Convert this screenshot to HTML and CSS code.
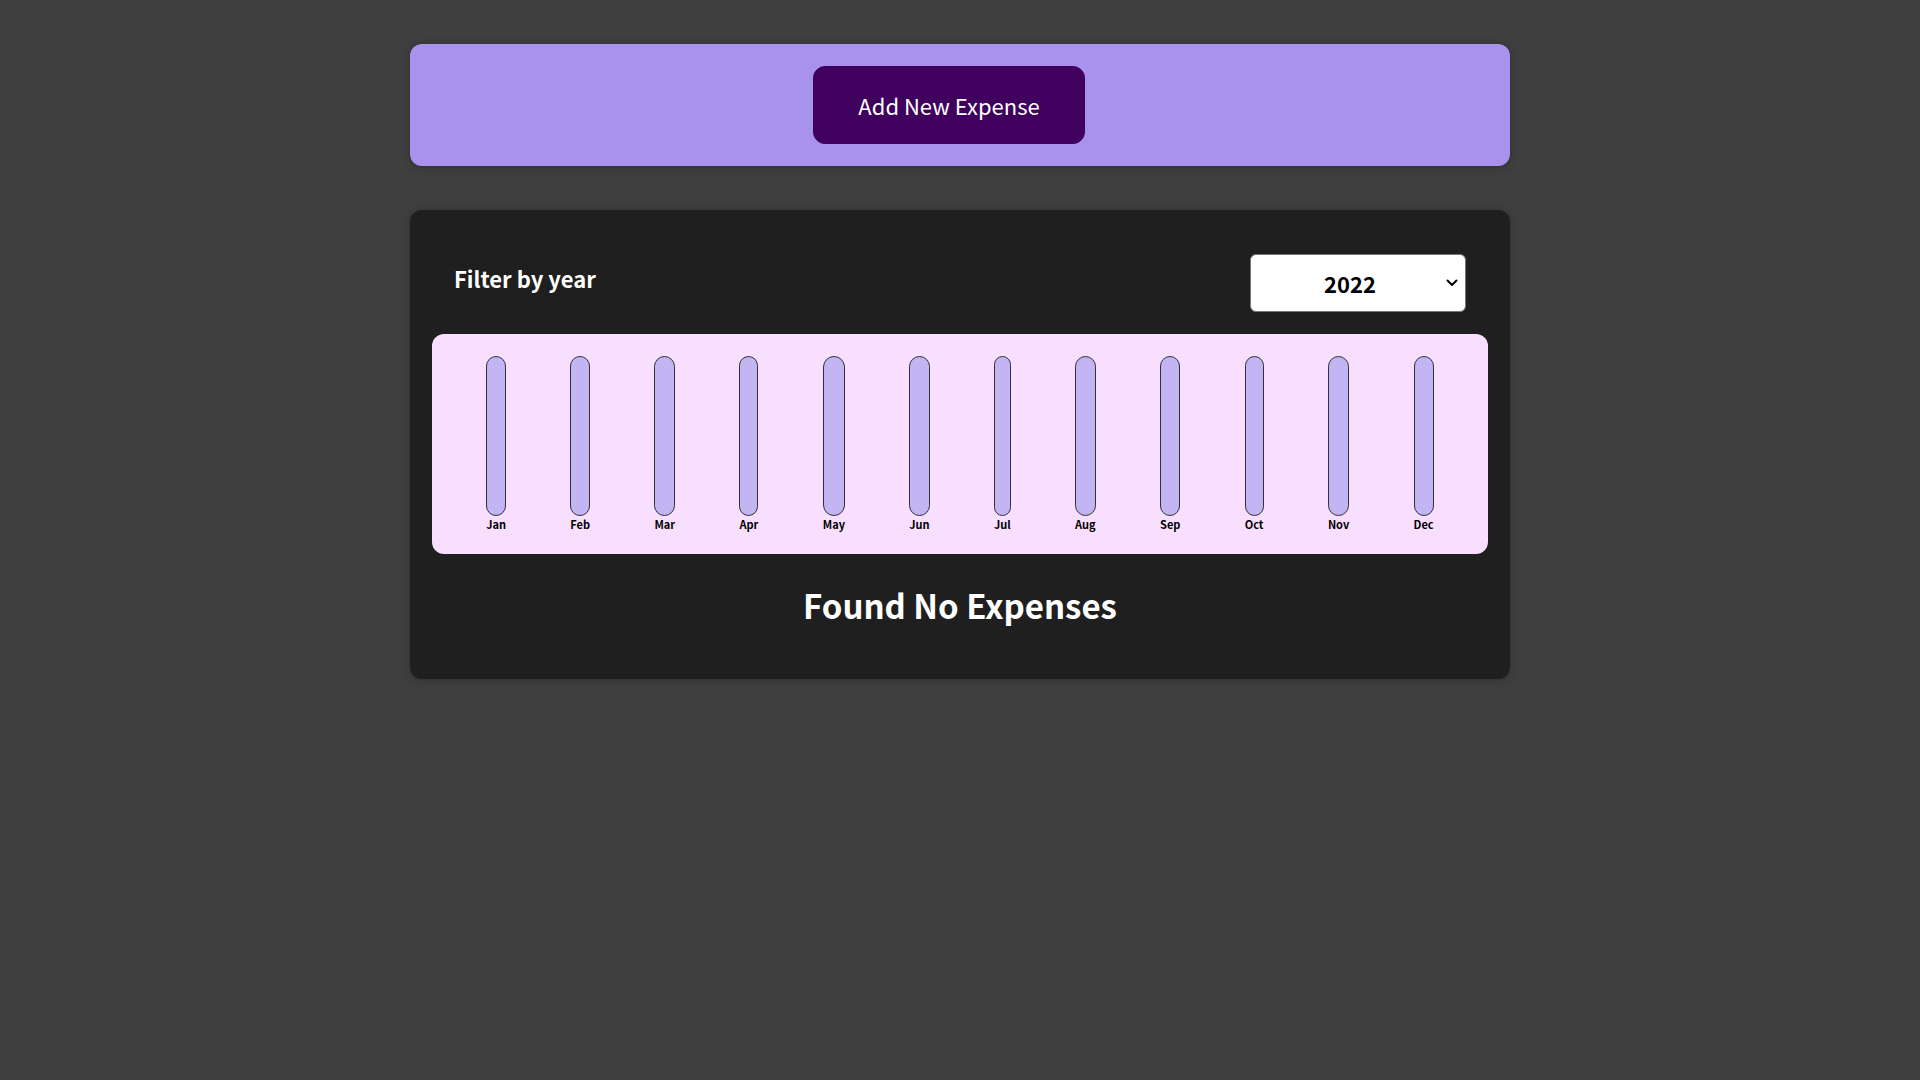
FILE: index.html
```html
<!DOCTYPE html>
<html lang="en">
<head>
<meta charset="utf-8">
<title>Expenses</title>
<link rel="stylesheet" href="styles.css">
</head>
<body>
<div class="new-expense">
  <button class="add-btn" type="button">Add New Expense</button>
</div>
<div class="expenses">
  <div class="expenses-filter">
    <div class="expenses-filter__control">
      <label>Filter by year</label>
      <div class="select-wrap">
        <select>
          <option>2022</option>
          <option>2021</option>
          <option>2020</option>
          <option>2019</option>
        </select>
        <svg class="chevron" width="12" height="8" viewBox="0 0 12 8" aria-hidden="true"><path d="M1.5 1.5 L6 6 L10.5 1.5" fill="none" stroke="#000" stroke-width="2" stroke-linecap="round" stroke-linejoin="round"/></svg>
      </div>
    </div>
  </div>
  <div class="chart">
    <div class="chart-bar"><div class="chart-bar__inner"><div class="chart-bar__fill" style="height:0%"></div></div><div class="chart-bar__label">Jan</div></div>
    <div class="chart-bar"><div class="chart-bar__inner"><div class="chart-bar__fill" style="height:0%"></div></div><div class="chart-bar__label">Feb</div></div>
    <div class="chart-bar"><div class="chart-bar__inner"><div class="chart-bar__fill" style="height:0%"></div></div><div class="chart-bar__label">Mar</div></div>
    <div class="chart-bar"><div class="chart-bar__inner"><div class="chart-bar__fill" style="height:0%"></div></div><div class="chart-bar__label">Apr</div></div>
    <div class="chart-bar"><div class="chart-bar__inner"><div class="chart-bar__fill" style="height:0%"></div></div><div class="chart-bar__label">May</div></div>
    <div class="chart-bar"><div class="chart-bar__inner"><div class="chart-bar__fill" style="height:0%"></div></div><div class="chart-bar__label">Jun</div></div>
    <div class="chart-bar"><div class="chart-bar__inner"><div class="chart-bar__fill" style="height:0%"></div></div><div class="chart-bar__label">Jul</div></div>
    <div class="chart-bar"><div class="chart-bar__inner"><div class="chart-bar__fill" style="height:0%"></div></div><div class="chart-bar__label">Aug</div></div>
    <div class="chart-bar"><div class="chart-bar__inner"><div class="chart-bar__fill" style="height:0%"></div></div><div class="chart-bar__label">Sep</div></div>
    <div class="chart-bar"><div class="chart-bar__inner"><div class="chart-bar__fill" style="height:0%"></div></div><div class="chart-bar__label">Oct</div></div>
    <div class="chart-bar"><div class="chart-bar__inner"><div class="chart-bar__fill" style="height:0%"></div></div><div class="chart-bar__label">Nov</div></div>
    <div class="chart-bar"><div class="chart-bar__inner"><div class="chart-bar__fill" style="height:0%"></div></div><div class="chart-bar__label">Dec</div></div>
  </div>
  <ul class="expenses-list">
    <h2 class="expenses-list__fallback">Found No Expenses</h2>
  </ul>
</div>
</body>
</html>
```
FILE: styles.css
```css
* {
  box-sizing: border-box;
}
html {
  font-family: "Noto Sans CJK JP", "Noto Sans", sans-serif;
  font-size: 22px;
}
body {
  margin: 0;
  background-color: #3f3f3f;
}
.new-expense {
  background-color: #a892ee;
  padding: 1rem;
  margin: 2rem auto;
  width: 50rem;
  max-width: 95%;
  border-radius: 12px;
  text-align: center;
  box-shadow: 0 1px 8px rgba(0, 0, 0, 0.25);
  display: flex;
  justify-content: center;
}
.add-btn {
  font: inherit;
  cursor: pointer;
  padding: 1rem 2rem;
  border: 1px solid #40005d;
  background-color: #40005d;
  color: white;
  border-radius: 12px;
  margin-right: 1rem;
}
.expenses {
  padding: 1rem;
  background-color: rgb(31, 31, 31);
  margin: 2rem auto;
  width: 50rem;
  max-width: 95%;
  border-radius: 12px;
  box-shadow: 0 1px 8px rgba(0, 0, 0, 0.25);
}
.expenses-filter {
  color: white;
  padding: 0 1rem;
}
.expenses-filter__control {
  display: flex;
  width: 100%;
  align-items: center;
  justify-content: space-between;
  margin: 1rem 0;
}
.expenses-filter label {
  font-weight: bold;
  margin-bottom: 0.5rem;
}
.select-wrap {
  position: relative;
  display: flex;
}
.expenses-filter select {
  appearance: none;
  -webkit-appearance: none;
  font: inherit;
  font-weight: bold;
  color: #000;
  background-color: #fff;
  border: 1px solid #767676;
  border-radius: 6px;
  width: 216px;
  height: 58px;
  padding: 0.5rem 1rem 0.5rem 73px;
  text-align: left;
}
.chevron {
  position: absolute;
  right: 8px;
  top: 25px;
  pointer-events: none;
}
.chart {
  padding: 1rem;
  border-radius: 12px;
  background-color: #f8dfff;
  text-align: center;
  display: flex;
  justify-content: space-around;
  height: 10rem;
}
.chart-bar {
  height: 100%;
  display: flex;
  flex-direction: column;
  align-items: center;
}
.chart-bar__inner {
  height: 100%;
  width: 100%;
  border: 1px solid #313131;
  border-radius: 12px;
  background-color: #c3b4f3;
  overflow: hidden;
  display: flex;
  flex-direction: column;
  justify-content: flex-end;
}
.chart-bar__fill {
  background-color: #4826b9;
  width: 100%;
}
.chart-bar__label {
  font-weight: bold;
  font-size: 0.5rem;
  text-align: center;
}
.expenses-list {
  list-style: none;
  padding: 0;
  margin: 0;
}
.expenses-list__fallback {
  color: white;
  text-align: center;
  font-size: 1.5rem;
  margin: 0.83em 0 0.83em;
}
```
